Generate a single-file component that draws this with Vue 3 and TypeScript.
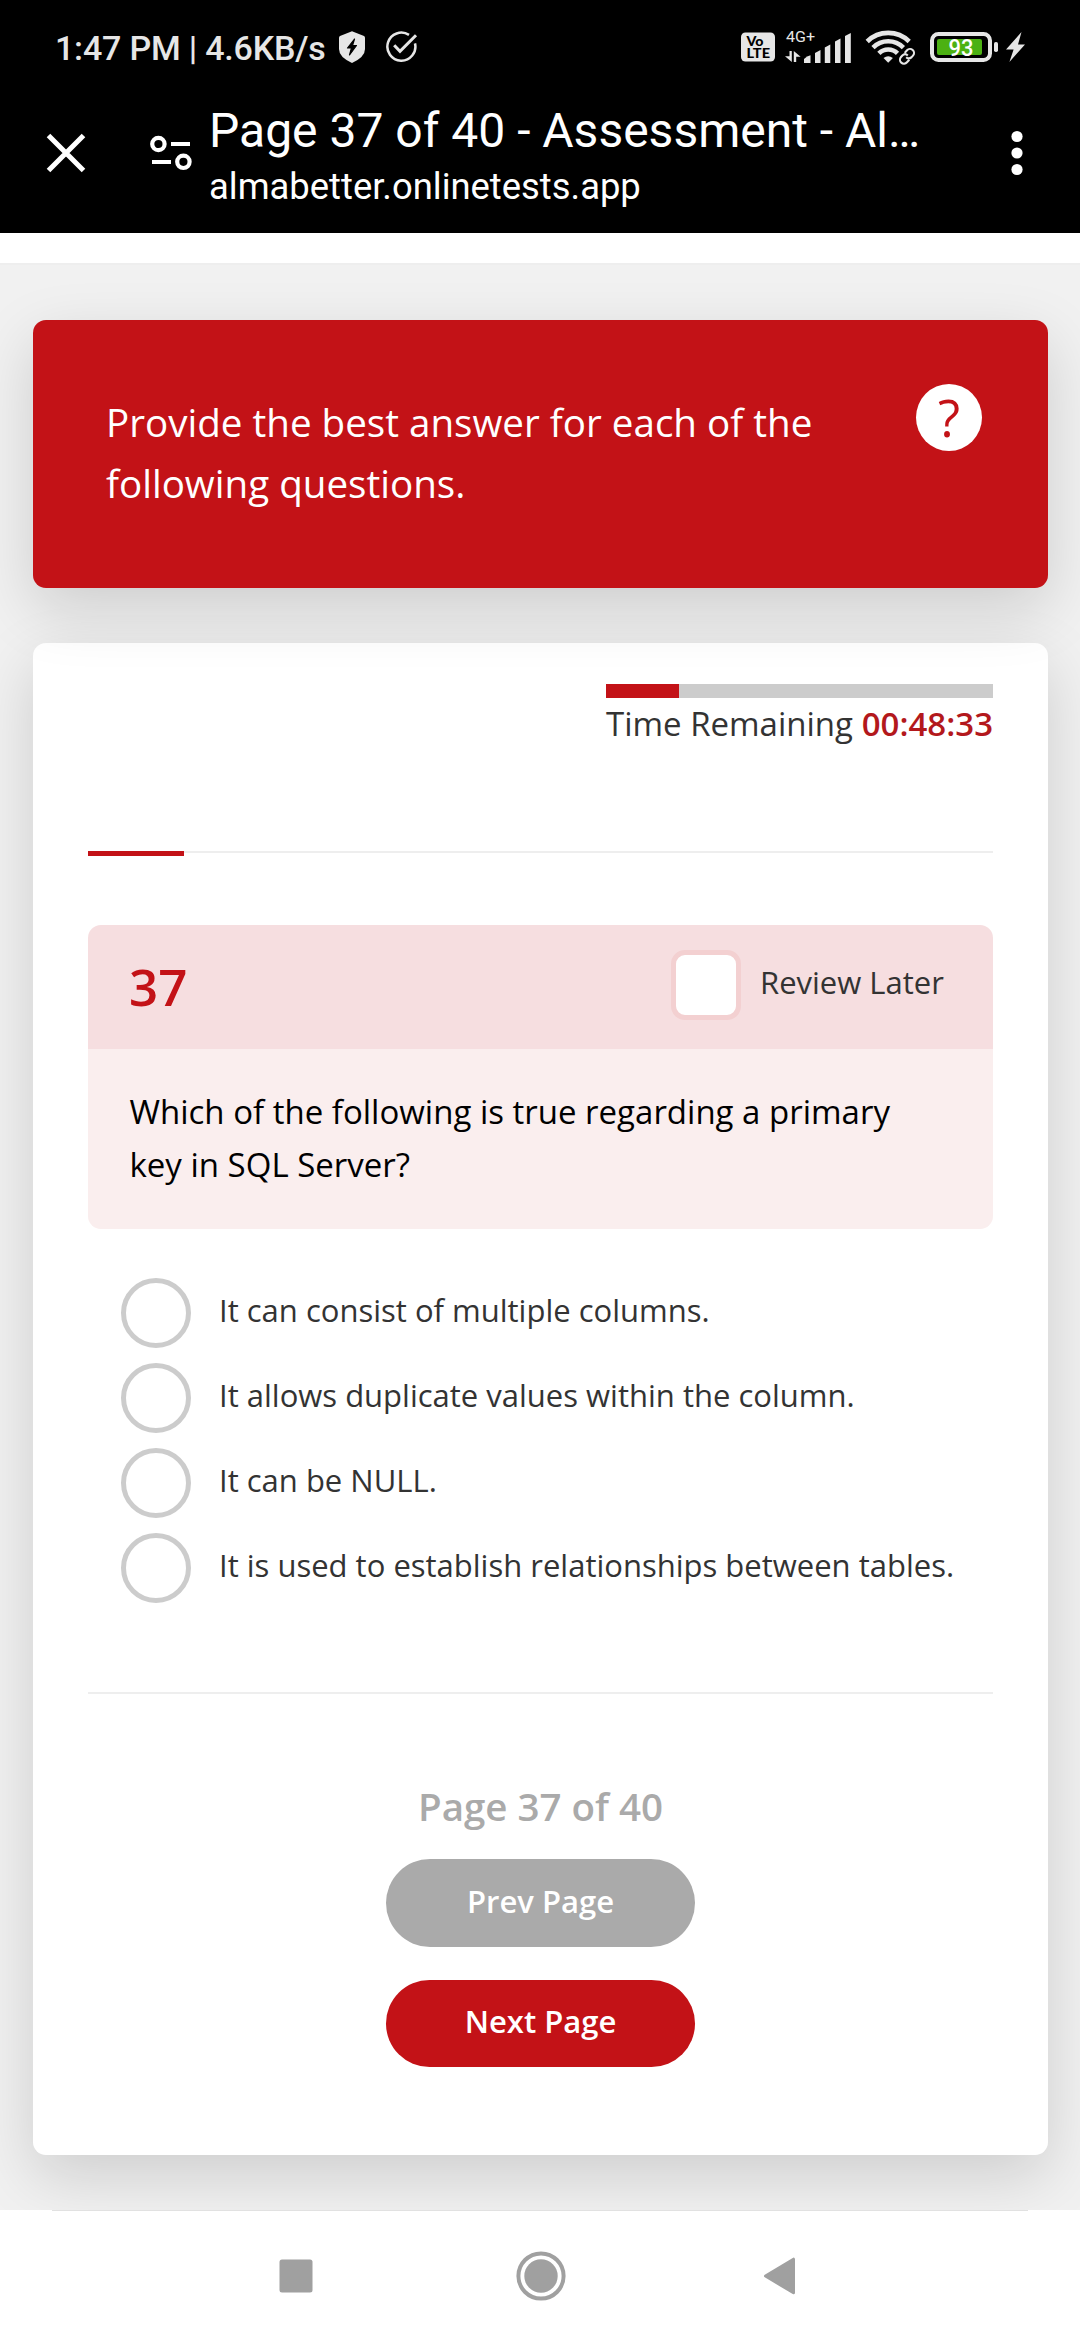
<script setup lang="ts">
interface Option {
  id: number
  text: string
}

const options: Option[] = [
  { id: 1, text: 'It can consist of multiple columns.' },
  { id: 2, text: 'It allows duplicate values within the column.' },
  { id: 3, text: 'It can be NULL.' },
  { id: 4, text: 'It is used to establish relationships between tables.' },
]

const timeUsed = 18.9
const progress = 10.6
</script>

<template>
  <div class="screen">
    <header class="top">
      <div class="status">
        <span class="clock">1:47 PM | 4.6KB/s</span>
        <svg class="shield" width="26" height="32" viewBox="0 0 26 32">
          <path d="M13 0.3 L25 5 Q26 5.6 26 7 V18 Q26 26 13 32 Q0 26 0 18 V7 Q0 5.6 1 5 Z" fill="#e6e6e6" />
          <path d="M15.5 8 L8.5 17 H12.5 L10.5 24 L17.5 14.5 H13.5 Z" fill="#000" stroke="#000" stroke-width="1.2" stroke-linejoin="round" />
        </svg>
        <svg class="check" width="32" height="32" viewBox="0 0 32 32" fill="none" stroke="#e6e6e6" stroke-width="2.5">
          <path d="M23 3.9 A14 14 0 1 0 29 12.4" />
          <path d="M8.2 14.2 L14 20.3 L30 4.3" stroke-width="3" />
        </svg>

        <div class="indicators">
          <svg class="volte" width="34" height="30" viewBox="0 0 34 30">
            <rect x="0" y="0.5" width="34" height="29" rx="4.5" fill="#e6e6e6" />
            <text x="5.5" y="13.5" textLength="17" lengthAdjust="spacingAndGlyphs">Vo</text>
            <text x="5.5" y="26" textLength="23.5" lengthAdjust="spacingAndGlyphs">LTE</text>
          </svg>
          <svg class="signal" width="68" height="38" viewBox="0 -2 68 38" fill="#e6e6e6">
            <text x="1" y="12.3" textLength="29" lengthAdjust="spacingAndGlyphs">4G+</text>
            <path d="M4.5 21 H6.8 V32 L0 26.2 H4.5 Z M8.8 32 V21 L15.6 26.8 H11.2 V32 Z" />
            <path d="M19 29 Q22 26 25.5 25.2 V33 H19 Z" />
            <path d="M30 23 L35.5 20 V33 H30 Z" />
            <path d="M39.8 17.5 L45.3 14.5 V33 H39.8 Z" />
            <path d="M50 11.5 L55.5 8.5 V33 H50 Z" />
            <path d="M60 6 L65.8 3 V33 H60 Z" />
          </svg>
          <svg class="wifi" width="52" height="38" viewBox="0 0 52 38" fill="none" stroke="#e6e6e6">
            <path d="M2.2 13.5 A30 30 0 0 1 44.2 13.5" stroke-width="4.6" />
            <path d="M8 19.6 A21.5 21.5 0 0 1 38.4 19.6" stroke-width="4.6" />
            <path d="M13.9 25.4 A13.2 13.2 0 0 1 32.5 25.4" stroke-width="4.6" />
            <path d="M18.5 30 Q23.2 26.4 27.9 30 L23.2 34.8 Z" fill="#e6e6e6" stroke="none" />
            <g transform="translate(42 28.3) rotate(-48)">
              <rect x="-11" y="-6" width="22" height="12" fill="#000" stroke="none" />
              <path d="M-1 4 H-4.5 A4 4 0 0 1 -4.5 -4 H-2.5 A4 4 0 0 1 1.2 0" stroke-width="2.1" />
              <path d="M1 -4 H4.5 A4 4 0 0 1 4.5 4 H2.5 A4 4 0 0 1 -1.2 0" stroke-width="2.1" />
            </g>
          </svg>
          <svg class="battery" width="69" height="30" viewBox="0 0 69 30">
            <rect x="2" y="2" width="58" height="26" rx="6.5" fill="none" stroke="#e6e6e6" stroke-width="4" />
            <rect x="7" y="7" width="45" height="16" rx="2" fill="#4cb113" />
            <rect x="64" y="10" width="4" height="10" rx="1.8" fill="#e6e6e6" />
            <text x="18.5" y="24" textLength="25" lengthAdjust="spacingAndGlyphs">93</text>
          </svg>
          <svg class="bolt" width="20" height="30" viewBox="0 0 20 30">
            <path d="M15.5 0 L0 17.5 H7.6 L3.4 30 L19 12.5 H12 Z" fill="#e6e6e6" />
          </svg>
        </div>
      </div>

      <div class="appbar">
        <svg class="close" width="40" height="40" viewBox="0 0 40 40">
          <path d="M2.5 2.5 L37.5 37.5 M37.5 2.5 L2.5 37.5" stroke="#fff" stroke-width="5" />
        </svg>
        <svg class="tune" width="42" height="36" viewBox="0 0 42 36" fill="none" stroke="#fff" stroke-width="4.2">
          <circle cx="8.4" cy="9" r="6.2" />
          <path d="M21 9 H40 M2 27 H21" />
          <circle cx="33.4" cy="26.8" r="6.2" />
        </svg>
        <div class="titles">
          <div class="title">Page 37 of 40 - Assessment - Al…</div>
          <div class="host">almabetter.onlinetests.app</div>
        </div>
        <svg class="more" width="12" height="46" viewBox="0 0 12 46" fill="#fff">
          <circle cx="6" cy="6.5" r="5.6" />
          <circle cx="6" cy="23" r="5.6" />
          <circle cx="6" cy="39.5" r="5.6" />
        </svg>
      </div>
    </header>

    <div class="strip"></div>

    <main class="page">
      <section class="banner">
        <p class="instructions">Provide the best answer for each of the<br />following questions.</p>
        <button class="help">?</button>
      </section>

      <section class="card">
        <div class="timer">
          <div class="timebar"><div class="timefill" :style="{ width: timeUsed + '%' }"></div></div>
          <div class="timetext"><span>Time Remaining</span><b>00:48:33</b></div>
        </div>

        <div class="progress"><div class="progressfill" :style="{ width: progress + '%' }"></div></div>

        <div class="question">
          <div class="qhead">
            <span class="number">37</span>
            <label class="review"><span class="checkbox"></span><span class="reviewtext">Review Later</span></label>
          </div>
          <p class="qbody">Which of the following is true regarding a primary<br />key in SQL Server?</p>
        </div>

        <ul class="options">
          <li v-for="o in options" :key="o.id" class="option">
            <span class="radio"></span>
            <span class="optiontext">{{ o.text }}</span>
          </li>
        </ul>

        <div class="rule"></div>

        <footer class="pager">
          <div class="pagelabel">Page 37 of 40</div>
          <button class="btn prev">Prev Page</button>
          <button class="btn next">Next Page</button>
        </footer>
      </section>
    </main>

    <nav class="navbar">
      <div class="navline"></div>
      <div class="navicons">
        <svg width="34" height="34" viewBox="0 0 34 34"><rect x="0.5" y="0.5" width="33" height="33" rx="2.5" fill="#a0a0a0" /></svg>
        <svg class="home" width="50" height="50" viewBox="0 0 50 50">
          <circle cx="25" cy="25" r="22.6" fill="none" stroke="#a0a0a0" stroke-width="4" />
          <circle cx="25" cy="25" r="16.7" fill="#a0a0a0" />
        </svg>
        <svg width="34" height="38" viewBox="0 0 34 38">
          <path d="M2.5 19 L30.5 2.2 V35.8 Z" fill="#a0a0a0" stroke="#a0a0a0" stroke-width="3" stroke-linejoin="round" />
        </svg>
      </div>
    </nav>
  </div>
</template>

<style>
body {
  margin: 0;
  overflow: hidden;
}
</style>

<style scoped>
.screen {
  display: flex;
  flex-direction: column;
  width: 1080px;
  height: 2340px;
  overflow: hidden;
  background: #fff;
  font-family: 'Open Sans', sans-serif;
  color: #333;
}
.screen * {
  box-sizing: border-box;
}
svg {
  display: block;
  flex: none;
}
p,
ul {
  margin: 0;
  padding: 0;
  list-style: none;
}
button {
  border: 0;
  padding: 0;
  font: inherit;
}

/* Phone status bar and browser bar */
.top {
  height: 233px;
  background: #000;
  font-family: Roboto, sans-serif;
  flex: none;
}
.status {
  display: flex;
  align-items: center;
  height: 94px;
  padding-left: 55px;
}
.clock {
  width: 284px;
  padding-top: 1px;
  font-size: 34px;
  line-height: 60px;
  font-weight: 500;
  letter-spacing: -0.2px;
  color: #e6e6e6;
  white-space: nowrap;
}
.check {
  margin-left: 21px;
}
.indicators {
  display: flex;
  align-items: center;
  height: 94px;
  margin-left: 323px;
}
.volte text {
  font: 900 13.5px Lato, sans-serif;
  fill: #000;
}
.signal {
  margin-left: 10px;
}
.signal text {
  font: 400 15.5px Roboto, sans-serif;
}
.wifi {
  margin-left: 11.5px;
}
.battery {
  margin-left: 13.5px;
}
.battery text {
  font: 500 23px Roboto, sans-serif;
  fill: #fff;
}
.bolt {
  margin-left: 7px;
}
.appbar {
  display: flex;
  align-items: center;
  height: 139px;
  padding-bottom: 21px;
  color: #fff;
}
.close {
  margin-left: 46px;
}
.tune {
  margin-left: 64px;
}
.titles {
  width: 802px;
  padding: 8px 0 0 17px;
  white-space: nowrap;
}
.title {
  font-size: 48px;
  line-height: 60px;
}
.host {
  font-size: 36.4px;
  line-height: 52px;
}
.more {
  margin-left: 17px;
}

/* Page */
.strip {
  height: 30px;
  flex: none;
}
.page {
  flex: none;
  height: 1947px;
  padding: 55px 32px 0 33px;
  border-top: 2px solid #eee;
  background: #f1f1f1;
  overflow: hidden;
}
.banner {
  position: relative;
  z-index: 1;
  display: flex;
  justify-content: space-between;
  height: 268px;
  padding: 72px 66px 0 73px;
  border-radius: 13px;
  background: #c31217;
  box-shadow: 0 21px 62px rgba(0, 0, 0, 0.15);
  color: #fff;
}
.instructions {
  font-size: 38.6px;
  line-height: 61px;
  white-space: nowrap;
}
.help {
  width: 66px;
  height: 67px;
  margin-top: -8px;
  padding-bottom: 2px;
  border-radius: 50%;
  background: #fff;
  color: #c31217;
  font-size: 51px;
  font-weight: 500;
  line-height: 64px;
}
.card {
  height: 1512px;
  margin-top: 55px;
  padding: 41px 55px 0;
  border-radius: 13px;
  background: #fff;
  box-shadow: 0 21px 62px rgba(0, 0, 0, 0.15);
}
.timer {
  width: 387px;
  margin-left: auto;
}
.timebar {
  height: 14px;
  background: #ccc;
}
.timefill {
  height: 14px;
  background: #c31217;
}
.timetext {
  display: flex;
  justify-content: space-between;
  margin-top: 3px;
  font-size: 33px;
  line-height: 46px;
  white-space: nowrap;
}
.timetext b {
  font-weight: 600;
  color: #b3181c;
}
.progress {
  height: 5px;
  margin-top: 104px;
  background: linear-gradient(#eee 2px, transparent 2px);
}
.progressfill {
  height: 5px;
  background: #c31217;
}
.question {
  margin-top: 69px;
  border-radius: 13px;
  overflow: hidden;
}
.qhead {
  display: flex;
  justify-content: space-between;
  height: 124px;
  padding: 0 50px 0 41px;
  background: #f6dee0;
}
.number {
  font-size: 51px;
  font-weight: 600;
  line-height: 122px;
  color: #c31217;
}
.review {
  display: flex;
  padding-top: 25px;
}
.checkbox {
  width: 70px;
  height: 70px;
  border: 5px solid #f3d0d1;
  border-radius: 14px;
  background: #fff;
}
.reviewtext {
  width: 183px;
  margin-left: 19px;
  font-size: 31px;
  line-height: 64px;
  white-space: nowrap;
}
.qbody {
  height: 180px;
  padding: 36px 0 0 41.5px;
  background: #faeeee;
  font-size: 33px;
  line-height: 53px;
  color: #000;
  white-space: nowrap;
}
.options {
  display: flex;
  flex-direction: column;
  gap: 15px;
  margin-top: 49px;
  padding-left: 33px;
}
.option {
  display: flex;
  height: 70px;
}
.radio {
  width: 70px;
  height: 70px;
  border: 5px solid #ccc;
  border-radius: 50%;
}
.optiontext {
  margin-left: 28px;
  font-size: 31px;
  line-height: 65px;
  white-space: nowrap;
}
.rule {
  height: 2px;
  margin-top: 89px;
  background: #eee;
}
.pager {
  display: flex;
  flex-direction: column;
  align-items: center;
  padding-top: 86px;
  font-weight: 600;
}
.pagelabel {
  margin-bottom: 27px;
  font-size: 38.5px;
  line-height: 52px;
  color: #aaa;
}
.btn {
  width: 309px;
  border-radius: 44px;
  font-size: 31px;
  font-weight: 600;
  color: #fff;
}
.prev {
  height: 88px;
  padding-bottom: 4px;
  background: #aaa;
}
.next {
  height: 87px;
  margin-top: 33px;
  padding-bottom: 5px;
  background: #c31217;
}

/* Android navigation */
.navbar {
  height: 130px;
  background: #fff;
}
.navline {
  height: 1px;
  margin: 0 52px;
  background: #e1e1e1;
}
.navicons {
  display: flex;
  align-items: center;
  justify-content: space-between;
  width: 518px;
  height: 129px;
  margin-left: 279px;
}
.home {
  margin-left: 5px;
}
</style>
